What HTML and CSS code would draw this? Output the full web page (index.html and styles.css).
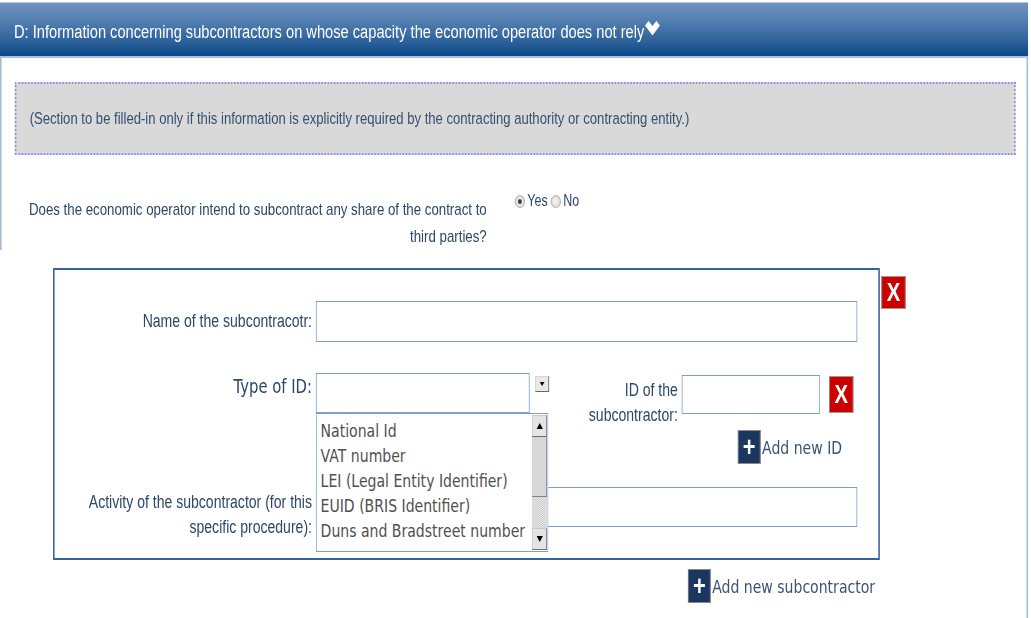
FILE: index.html
```html
<!DOCTYPE html>
<html>
<head>
<meta charset="utf-8">
<link rel="stylesheet" href="styles.css">
</head>
<body>
<div class="page">
  <div class="header">
    <span class="title">D: Information concerning subcontractors on whose capacity the economic operator does not rely</span>
    <svg class="chev" width="19" height="15" viewBox="0 0 19 15"><path d="M0 4.5 L4.5 0 L9.5 5 L14.5 0 L19 4.5 L9.5 14.5 Z" fill="#fff"/></svg>
  </div>
  <div class="panel">
    <div class="upper">
      <div class="note">(Section to be filled-in only if this information is explicitly required by the contracting authority or contracting entity.)</div>
      <div class="question">
        <div class="q-label">Does the economic operator intend to subcontract any share of the contract to third parties?</div>
        <div class="radios">
          <span class="radio checked"></span><span class="r-text">Yes</span>
          <span class="radio"></span><span class="r-text">No</span>
        </div>
      </div>
    </div>
    <div class="sub-row">
      <div class="subbox">
        <div class="field-row row-name">
          <label class="lbl">Name of the subcontracotr:</label>
          <div class="input wide h41"></div>
        </div>
        <div class="field-row row-type">
          <label class="lbl lbl-type">Type of ID:</label>
          <div class="select">
            <div class="select-box"></div>
            <div class="listbox">
              <ul class="options">
                <li>National Id</li>
                <li>VAT number</li>
                <li>LEI (Legal Entity Identifier)</li>
                <li>EUID (BRIS Identifier)</li>
                <li>Duns and Bradstreet number</li>
              </ul>
              <div class="scrollbar">
                <span class="sb-btn"><span class="tri-up"></span></span>
                <span class="sb-thumb"></span>
                <span class="sb-track"></span>
                <span class="sb-btn"><span class="tri-down"></span></span>
              </div>
            </div>
          </div>
          <span class="arrow-btn"><span class="tri-down small"></span></span>
          <div class="id-group">
            <div class="id-line">
              <label class="id-lbl">ID of the subcontractor:</label>
              <div class="input id-input"></div>
              <span class="btn-x btn-x-small">X</span>
            </div>
            <div class="add add-id"><span class="plus">+</span><span class="add-text">Add new ID</span></div>
          </div>
        </div>
        <div class="field-row row-activity">
          <label class="lbl lbl-top">Activity of the subcontractor (for this specific procedure):</label>
          <div class="input wide h40"></div>
        </div>
      </div>
      <span class="btn-x btn-x-big">X</span>
    </div>
    <div class="add add-sub"><span class="plus">+</span><span class="add-text">Add new subcontractor</span></div>
  </div>
</div>
</body>
</html>
```
FILE: styles.css
```css
html, body {
  margin: 0;
  padding: 0;
  overflow: hidden;
  background: #fff;
}

.page {
  width: 1320px;
  transform: scaleX(0.78);
  transform-origin: 0 0;
  font-family: "Liberation Sans", Arial, sans-serif;
  color: #2b4869;
}

.header {
  margin-top: 2px;
  width: 1318px;
  height: 56px;
  box-sizing: border-box;
  border-top: 1px solid #b7c8de;
  border-bottom: 2px solid #a9c0dd;
  background: linear-gradient(#6f93bd 0%, #4d7aae 40%, #2a5f98 75%, #0b4688 100%);
  display: flex;
  align-items: center;
  padding-left: 18px;
  padding-top: 5px;
  color: #fff;
  font-size: 18.8px;
}

.chev {
  margin-left: 1px;
  margin-top: -8px;
}

.panel {
  width: 1318px;
  box-sizing: border-box;
  border-right: 2px solid #a7bad3;
  padding-bottom: 20px;
}

.upper {
  border-left: 2px solid #a7bad3;
  padding-top: 24px;
  height: 192px;
  box-sizing: border-box;
}

.note {
  margin-left: 17px;
  margin-right: 14px;
  height: 73px;
  box-sizing: border-box;
  border: 2px dotted #8b8be8;
  background: #d9d9d9;
  display: flex;
  align-items: center;
  padding-left: 17px;
  font-size: 16.8px;
  color: #34506f;
}

.question {
  display: flex;
  align-items: flex-start;
  margin-top: 41px;
  padding-left: 22px;
}

.q-label {
  width: 600px;
  text-align: right;
  font-size: 17px;
  line-height: 27px;
}

.radios {
  display: flex;
  align-items: center;
  margin-left: 36px;
  margin-top: -3px;
  font-size: 16px;
  line-height: 16px;
}

.radio {
  width: 13px;
  height: 13px;
  box-sizing: border-box;
  border-radius: 50%;
  border: 1px solid #a0a0a0;
  background: radial-gradient(circle, #f4f4f4 0%, #d6d6d6 100%);
  display: flex;
  align-items: center;
  justify-content: center;
}

.radio.checked::after {
  content: "";
  width: 5px;
  height: 5px;
  border-radius: 50%;
  background: #3a3a3a;
}

.r-text {
  margin-left: 3px;
  margin-right: 4px;
}

.sub-row {
  display: flex;
  align-items: flex-start;
  margin-top: 18px;
  padding-left: 68px;
}

.subbox {
  width: 1060px;
  box-sizing: border-box;
  border: 2px solid #3563a0;
  padding: 31px 27px 18px 0;
}

.field-row {
  display: flex;
  align-items: flex-start;
}

.lbl {
  width: 330px;
  flex: none;
  text-align: right;
  font-size: 18px;
  margin-right: 5px;
}

.row-name {
  align-items: center;
}

.row-type {
  margin-top: 31px;
}

.row-activity {
  margin-top: 23px;
}

.lbl-type {
  font-family: "DejaVu Sans", Verdana, sans-serif;
  font-size: 19px;
  line-height: 22px;
  padding-top: 2px;
}

.lbl-top {
  line-height: 25px;
  padding-top: 3px;
}

.input {
  box-sizing: border-box;
  border: 1px solid #7c9fd0;
  background: #fff;
}

.wide {
  flex: 1;
}

.h41 { height: 41px; }
.h40 { height: 40px; }

.select {
  position: relative;
  width: 274px;
  flex: none;
}

.select-box {
  height: 40px;
  box-sizing: border-box;
  border: 1px solid #7c9fd0;
  background: #fff;
}

.listbox {
  position: absolute;
  top: 100%;
  left: 0;
  width: 298px;
  height: 139px;
  box-sizing: border-box;
  border: 1px solid #7c9fd0;
  background: #fff;
  z-index: 2;
}

.options {
  list-style: none;
  margin: 0;
  padding: 4px 0 0 5px;
  font-family: "DejaVu Sans", Verdana, sans-serif;
  font-size: 18px;
  line-height: 25px;
  color: #505050;
}

.scrollbar {
  position: absolute;
  top: 1px;
  right: 1px;
  bottom: 1px;
  width: 19px;
  display: flex;
  flex-direction: column;
  background: #eee;
}

.sb-btn {
  height: 22px;
  flex: none;
  box-sizing: border-box;
  border: 1px solid #c8c8c8;
  border-right-color: #707070;
  border-bottom-color: #707070;
  background: #e4e4e4;
  display: flex;
  align-items: center;
  justify-content: center;
}

.sb-thumb {
  height: 60px;
  flex: none;
  box-sizing: border-box;
  border: 1px solid #d0d0d0;
  border-right-color: #808080;
  border-bottom-color: #808080;
  background: #d8d8d8;
}

.sb-track {
  flex: 1;
  background: repeating-conic-gradient(#c4c4c4 0% 25%, #f0f0f0 0% 50%) 0 0 / 2px 2px;
}

.tri-up {
  width: 0;
  height: 0;
  border-left: 4px solid transparent;
  border-right: 4px solid transparent;
  border-bottom: 6px solid #000;
}

.tri-down {
  width: 0;
  height: 0;
  border-left: 4px solid transparent;
  border-right: 4px solid transparent;
  border-top: 6px solid #000;
}

.tri-down.small {
  border-left-width: 3px;
  border-right-width: 3px;
  border-top-width: 4px;
}

.arrow-btn {
  width: 18px;
  height: 16px;
  flex: none;
  box-sizing: border-box;
  margin-left: 7px;
  margin-top: 3px;
  border: 1px solid #d4d4d4;
  border-right-color: #666;
  border-bottom-color: #666;
  background: #e8e8e8;
  display: flex;
  align-items: center;
  justify-content: center;
}

.id-group {
  margin-left: 16px;
  margin-top: 2px;
}

.id-line {
  display: flex;
  align-items: flex-start;
}

.id-lbl {
  width: 149px;
  text-align: right;
  font-size: 18px;
  line-height: 25px;
  padding-top: 3px;
  margin-right: 5px;
}

.id-input {
  width: 177px;
  height: 39px;
}

.btn-x {
  display: flex;
  align-items: center;
  justify-content: center;
  box-sizing: border-box;
  background: #cc0000;
  border: 1px solid #9a9a9a;
  color: #fff;
  font-family: "Liberation Sans", Arial, sans-serif;
  font-weight: bold;
  font-size: 26px;
  flex: none;
}

.btn-x-small {
  width: 31px;
  height: 37px;
  margin-left: 12px;
  margin-top: 1px;
}

.btn-x-big {
  width: 31px;
  height: 33px;
  margin-left: 2px;
  margin-top: 8px;
}

.add {
  display: flex;
  align-items: center;
  font-family: "DejaVu Sans", Verdana, sans-serif;
  color: #3d5272;
}

.plus {
  width: 29px;
  height: 34px;
  box-sizing: border-box;
  background: #1b365f;
  border: 1px solid #8a8a8a;
  color: #fff;
  font-family: "Liberation Sans", Arial, sans-serif;
  font-weight: bold;
  font-size: 28px;
  display: flex;
  align-items: center;
  justify-content: center;
  margin-right: 2px;
  flex: none;
}

.add-id {
  margin-top: 2px;
  margin-left: 226px;
  font-size: 18px;
}

.add-sub {
  margin-top: 9px;
  margin-left: 882px;
  font-size: 18px;
}
```
